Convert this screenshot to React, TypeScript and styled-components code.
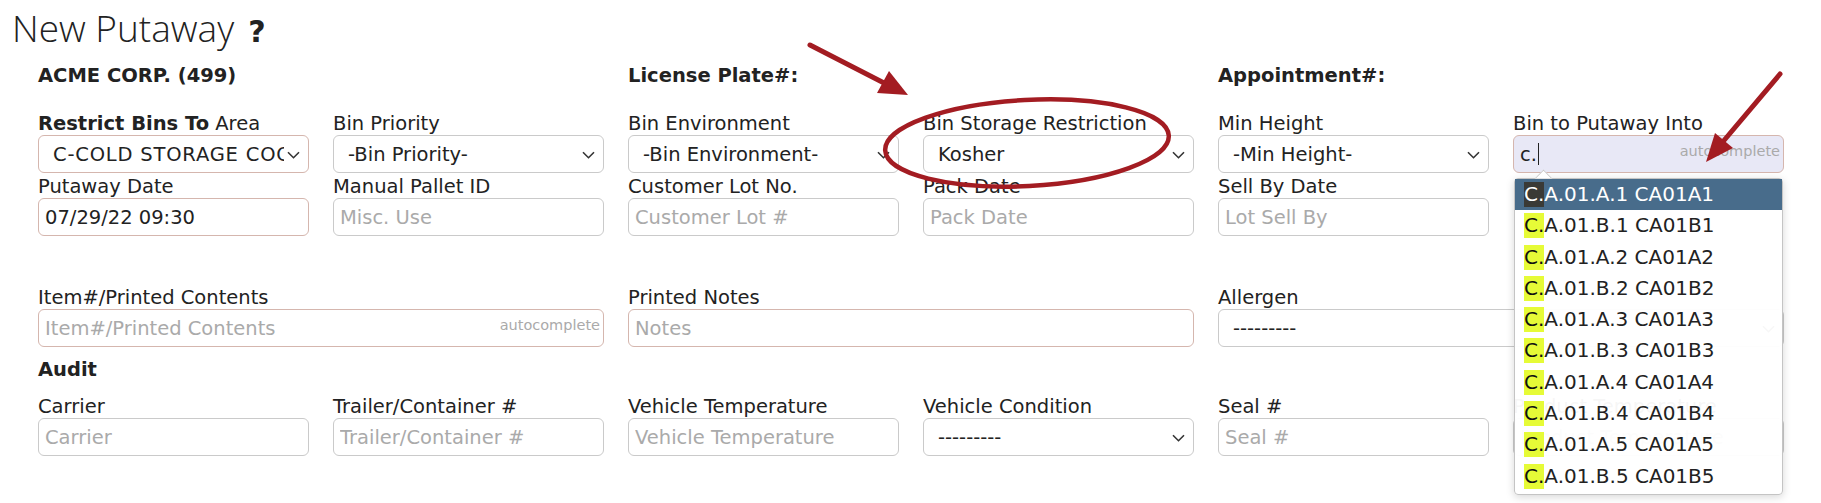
import styled, { createGlobalStyle, css } from 'styled-components'

const GlobalStyle = createGlobalStyle`
  html, body {
    margin: 0;
    padding: 0;
    background: #fff;
  }
  body {
    font-family: 'DejaVu Sans', Verdana, sans-serif;
    color: #222;
  }
`

const Page = styled.div`
    position: relative;
    width: 1821px;
    height: 503px;
    overflow: hidden;
`

const Title = styled.h1`
    margin: 0;
    padding: 5px 0 0 12px;
    height: 50px;
    box-sizing: border-box;
    font-family: 'Open Sans', sans-serif;
    font-weight: 300;
    font-size: 37px;
    line-height: 46px;
    color: #222;
`

const Help = styled.span`
    font-family: 'DejaVu Sans', sans-serif;
    font-weight: bold;
    font-size: 30px;
    margin-left: 14px;
`

const Form = styled.div`
    padding: 14px 0 0 38px;
`

const Grid = styled.div<{ $mt?: number }>`
    display: grid;
    grid-template-columns: repeat(6, 271px);
    column-gap: 24px;
    margin-top: ${(p) => p.$mt ?? 0}px;
`

const Heading = styled.div<{ $col: number }>`
    grid-column: ${(p) => p.$col};
    font-weight: bold;
    font-size: 19.5px;
    line-height: 23px;
    white-space: nowrap;
`

const SectionTitle = styled.div`
    margin-top: 11px;
    font-weight: bold;
    font-size: 19.5px;
    line-height: 24px;
`

const Field = styled.div<{ $span?: number }>`
    grid-column: span ${(p) => p.$span ?? 1};
    display: flex;
    flex-direction: column;
`

const Label = styled.label`
    font-size: 19.5px;
    line-height: 23px;
    height: 23px;
    white-space: nowrap;
`

const ControlWrap = styled.div`
    position: relative;
`

const controlBase = css<{ $required?: boolean }>`
    box-sizing: border-box;
    height: 38px;
    width: 100%;
    border: 1px solid ${(p) => (p.$required ? '#d5b6ae' : '#cacaca')};
    border-radius: 6px;
    background: #fff;
    font-family: inherit;
    font-size: 19.5px;
    color: #222;
`

const TextInput = styled.input<{ $required?: boolean }>`
    ${controlBase}
    display: block;
    padding: 0 6px;
    outline: none;
    &::placeholder {
        color: #aaa;
    }
`

const SelectBox = styled.div<{ $required?: boolean }>`
    ${controlBase}
    display: flex;
    align-items: center;
    padding: 1px 8px 0 14px;
`

const SelectValue = styled.span<{ $tracking?: number }>`
    flex: 1;
    overflow: hidden;
    white-space: nowrap;
    margin-right: 3px;
    letter-spacing: ${(p) => p.$tracking ?? 0}px;
`

const LookupBox = styled.div`
    ${controlBase}
    display: flex;
    align-items: center;
    padding: 0 6px;
    background: #e8e8f6;
    border-color: #d5b6ae;
`

const Caret = styled.span`
    display: inline-block;
    width: 1px;
    height: 22px;
    margin-left: 1px;
    background: #222;
`

const Hint = styled.span`
    position: absolute;
    top: 7px;
    right: 4px;
    font-size: 14.5px;
    line-height: 18px;
    color: #aaa;
`

const Menu = styled.ul`
    position: absolute;
    top: 43px;
    left: 1px;
    width: 269px;
    box-sizing: border-box;
    margin: 0;
    padding: 0 0 2px;
    list-style: none;
    background: rgba(255, 255, 255, 0.96);
    border: 1px solid #c4c4c4;
    border-radius: 4px;
    box-shadow: 0 2px 8px rgba(0, 0, 0, 0.16);
    z-index: 10;

    &::before {
        content: '';
        position: absolute;
        top: -7px;
        left: 22px;
        width: 12px;
        height: 12px;
        background: #fff;
        border-top: 1px solid #c4c4c4;
        border-left: 1px solid #c4c4c4;
        transform: rotate(45deg);
        clip-path: polygon(0 0, 100% 0, 0 100%);
    }
`

const MenuItem = styled.li<{ $active?: boolean }>`
    height: 31.3px;
    line-height: 31.3px;
    padding-left: 9px;
    font-size: 20px;
    white-space: nowrap;
    background: ${(p) => (p.$active ? '#486c8b' : 'transparent')};
    color: ${(p) => (p.$active ? '#fff' : '#222')};
`

const Match = styled.span<{ $active?: boolean }>`
    display: inline-block;
    line-height: 25px;
    background: ${(p) => (p.$active ? '#3a3a36' : '#e6fb37')};
    color: ${(p) => (p.$active ? '#fff' : '#111')};
`

const Annotations = styled.svg`
    position: absolute;
    top: 0;
    left: 0;
    width: 1821px;
    height: 503px;
    pointer-events: none;
    z-index: 20;
`

function Chevron() {
    return (
        <svg width="13" height="8" viewBox="0 0 13 8">
            <path d="M1 1.2l5.5 5.5L12 1.2" fill="none" stroke="#333" strokeWidth="1.6" />
        </svg>
    )
}

function Select({ value, required, tracking }: { value: string; required?: boolean; tracking?: number }) {
    return (
        <SelectBox $required={required}>
            <SelectValue $tracking={tracking}>{value}</SelectValue>
            <Chevron />
        </SelectBox>
    )
}

const bins = ['A.01.A.1 CA01A1', 'A.01.B.1 CA01B1', 'A.01.A.2 CA01A2', 'A.01.B.2 CA01B2', 'A.01.A.3 CA01A3', 'A.01.B.3 CA01B3', 'A.01.A.4 CA01A4', 'A.01.B.4 CA01B4', 'A.01.A.5 CA01A5', 'A.01.B.5 CA01B5']

export default function App() {
    const red = '#a31c22'
    return (
        <Page>
            <GlobalStyle />
            <Title>
                New Putaway<Help>?</Help>
            </Title>
            <Form>
                <Grid>
                    <Heading $col={1}>ACME CORP. (499)</Heading>
                    <Heading $col={3}>License Plate#:</Heading>
                    <Heading $col={5}>Appointment#:</Heading>
                </Grid>

                <Grid $mt={25}>
                    <Field>
                        <Label>
                            <b>Restrict Bins To</b> Area
                        </Label>
                        <Select value="C-COLD STORAGE COOLER" tracking={0.8} required />
                    </Field>
                    <Field>
                        <Label>Bin Priority</Label>
                        <Select value="-Bin Priority-" />
                    </Field>
                    <Field>
                        <Label>Bin Environment</Label>
                        <Select value="-Bin Environment-" />
                    </Field>
                    <Field>
                        <Label>Bin Storage Restriction</Label>
                        <Select value="Kosher" />
                    </Field>
                    <Field>
                        <Label>Min Height</Label>
                        <Select value="-Min Height-" />
                    </Field>
                    <Field>
                        <Label>Bin to Putaway Into</Label>
                        <ControlWrap>
                            <LookupBox>
                                c.
                                <Caret />
                            </LookupBox>
                            <Hint>autocomplete</Hint>
                            <Menu>
                                {bins.map((b, i) => (
                                    <MenuItem key={b} $active={i === 0}>
                                        <Match $active={i === 0}>C.</Match>
                                        {b}
                                    </MenuItem>
                                ))}
                            </Menu>
                        </ControlWrap>
                    </Field>
                </Grid>

                <Grid $mt={2}>
                    <Field>
                        <Label>Putaway Date</Label>
                        <TextInput $required defaultValue="07/29/22 09:30" />
                    </Field>
                    <Field>
                        <Label>Manual Pallet ID</Label>
                        <TextInput placeholder="Misc. Use" />
                    </Field>
                    <Field>
                        <Label>Customer Lot No.</Label>
                        <TextInput placeholder="Customer Lot #" />
                    </Field>
                    <Field>
                        <Label>Pack Date</Label>
                        <TextInput placeholder="Pack Date" />
                    </Field>
                    <Field>
                        <Label>Sell By Date</Label>
                        <TextInput placeholder="Lot Sell By" />
                    </Field>
                </Grid>

                <Grid $mt={50}>
                    <Field $span={2}>
                        <Label>Item#/Printed Contents</Label>
                        <ControlWrap>
                            <TextInput $required placeholder="Item#/Printed Contents" />
                            <Hint>autocomplete</Hint>
                        </ControlWrap>
                    </Field>
                    <Field $span={2}>
                        <Label>Printed Notes</Label>
                        <TextInput $required placeholder="Notes" />
                    </Field>
                    <Field $span={2}>
                        <Label>Allergen</Label>
                        <Select value="---------" />
                    </Field>
                </Grid>

                <SectionTitle>Audit</SectionTitle>

                <Grid $mt={13}>
                    <Field>
                        <Label>Carrier</Label>
                        <TextInput placeholder="Carrier" />
                    </Field>
                    <Field>
                        <Label>Trailer/Container #</Label>
                        <TextInput placeholder="Trailer/Container #" />
                    </Field>
                    <Field>
                        <Label>Vehicle Temperature</Label>
                        <TextInput placeholder="Vehicle Temperature" />
                    </Field>
                    <Field>
                        <Label>Vehicle Condition</Label>
                        <Select value="---------" />
                    </Field>
                    <Field>
                        <Label>Seal #</Label>
                        <TextInput placeholder="Seal #" />
                    </Field>
                    <Field>
                        <Label>Product Temperature</Label>
                        <TextInput placeholder="Product Temperature" />
                    </Field>
                </Grid>
            </Form>

            <Annotations viewBox="0 0 1821 503">
                <ellipse cx="1027" cy="143" rx="142" ry="43" transform="rotate(-3 1027 143)" fill="none" stroke={red} strokeWidth="4.5" />
                <line x1="810" y1="45" x2="886" y2="84" stroke={red} strokeWidth="5" strokeLinecap="round" />
                <polygon points="908,95 877,93 889,71" fill={red} />
                <line x1="1780" y1="74" x2="1721" y2="144" stroke={red} strokeWidth="5" strokeLinecap="round" />
                <polygon points="1706,162 1733,148 1715,133" fill={red} />
            </Annotations>
        </Page>
    )
}
